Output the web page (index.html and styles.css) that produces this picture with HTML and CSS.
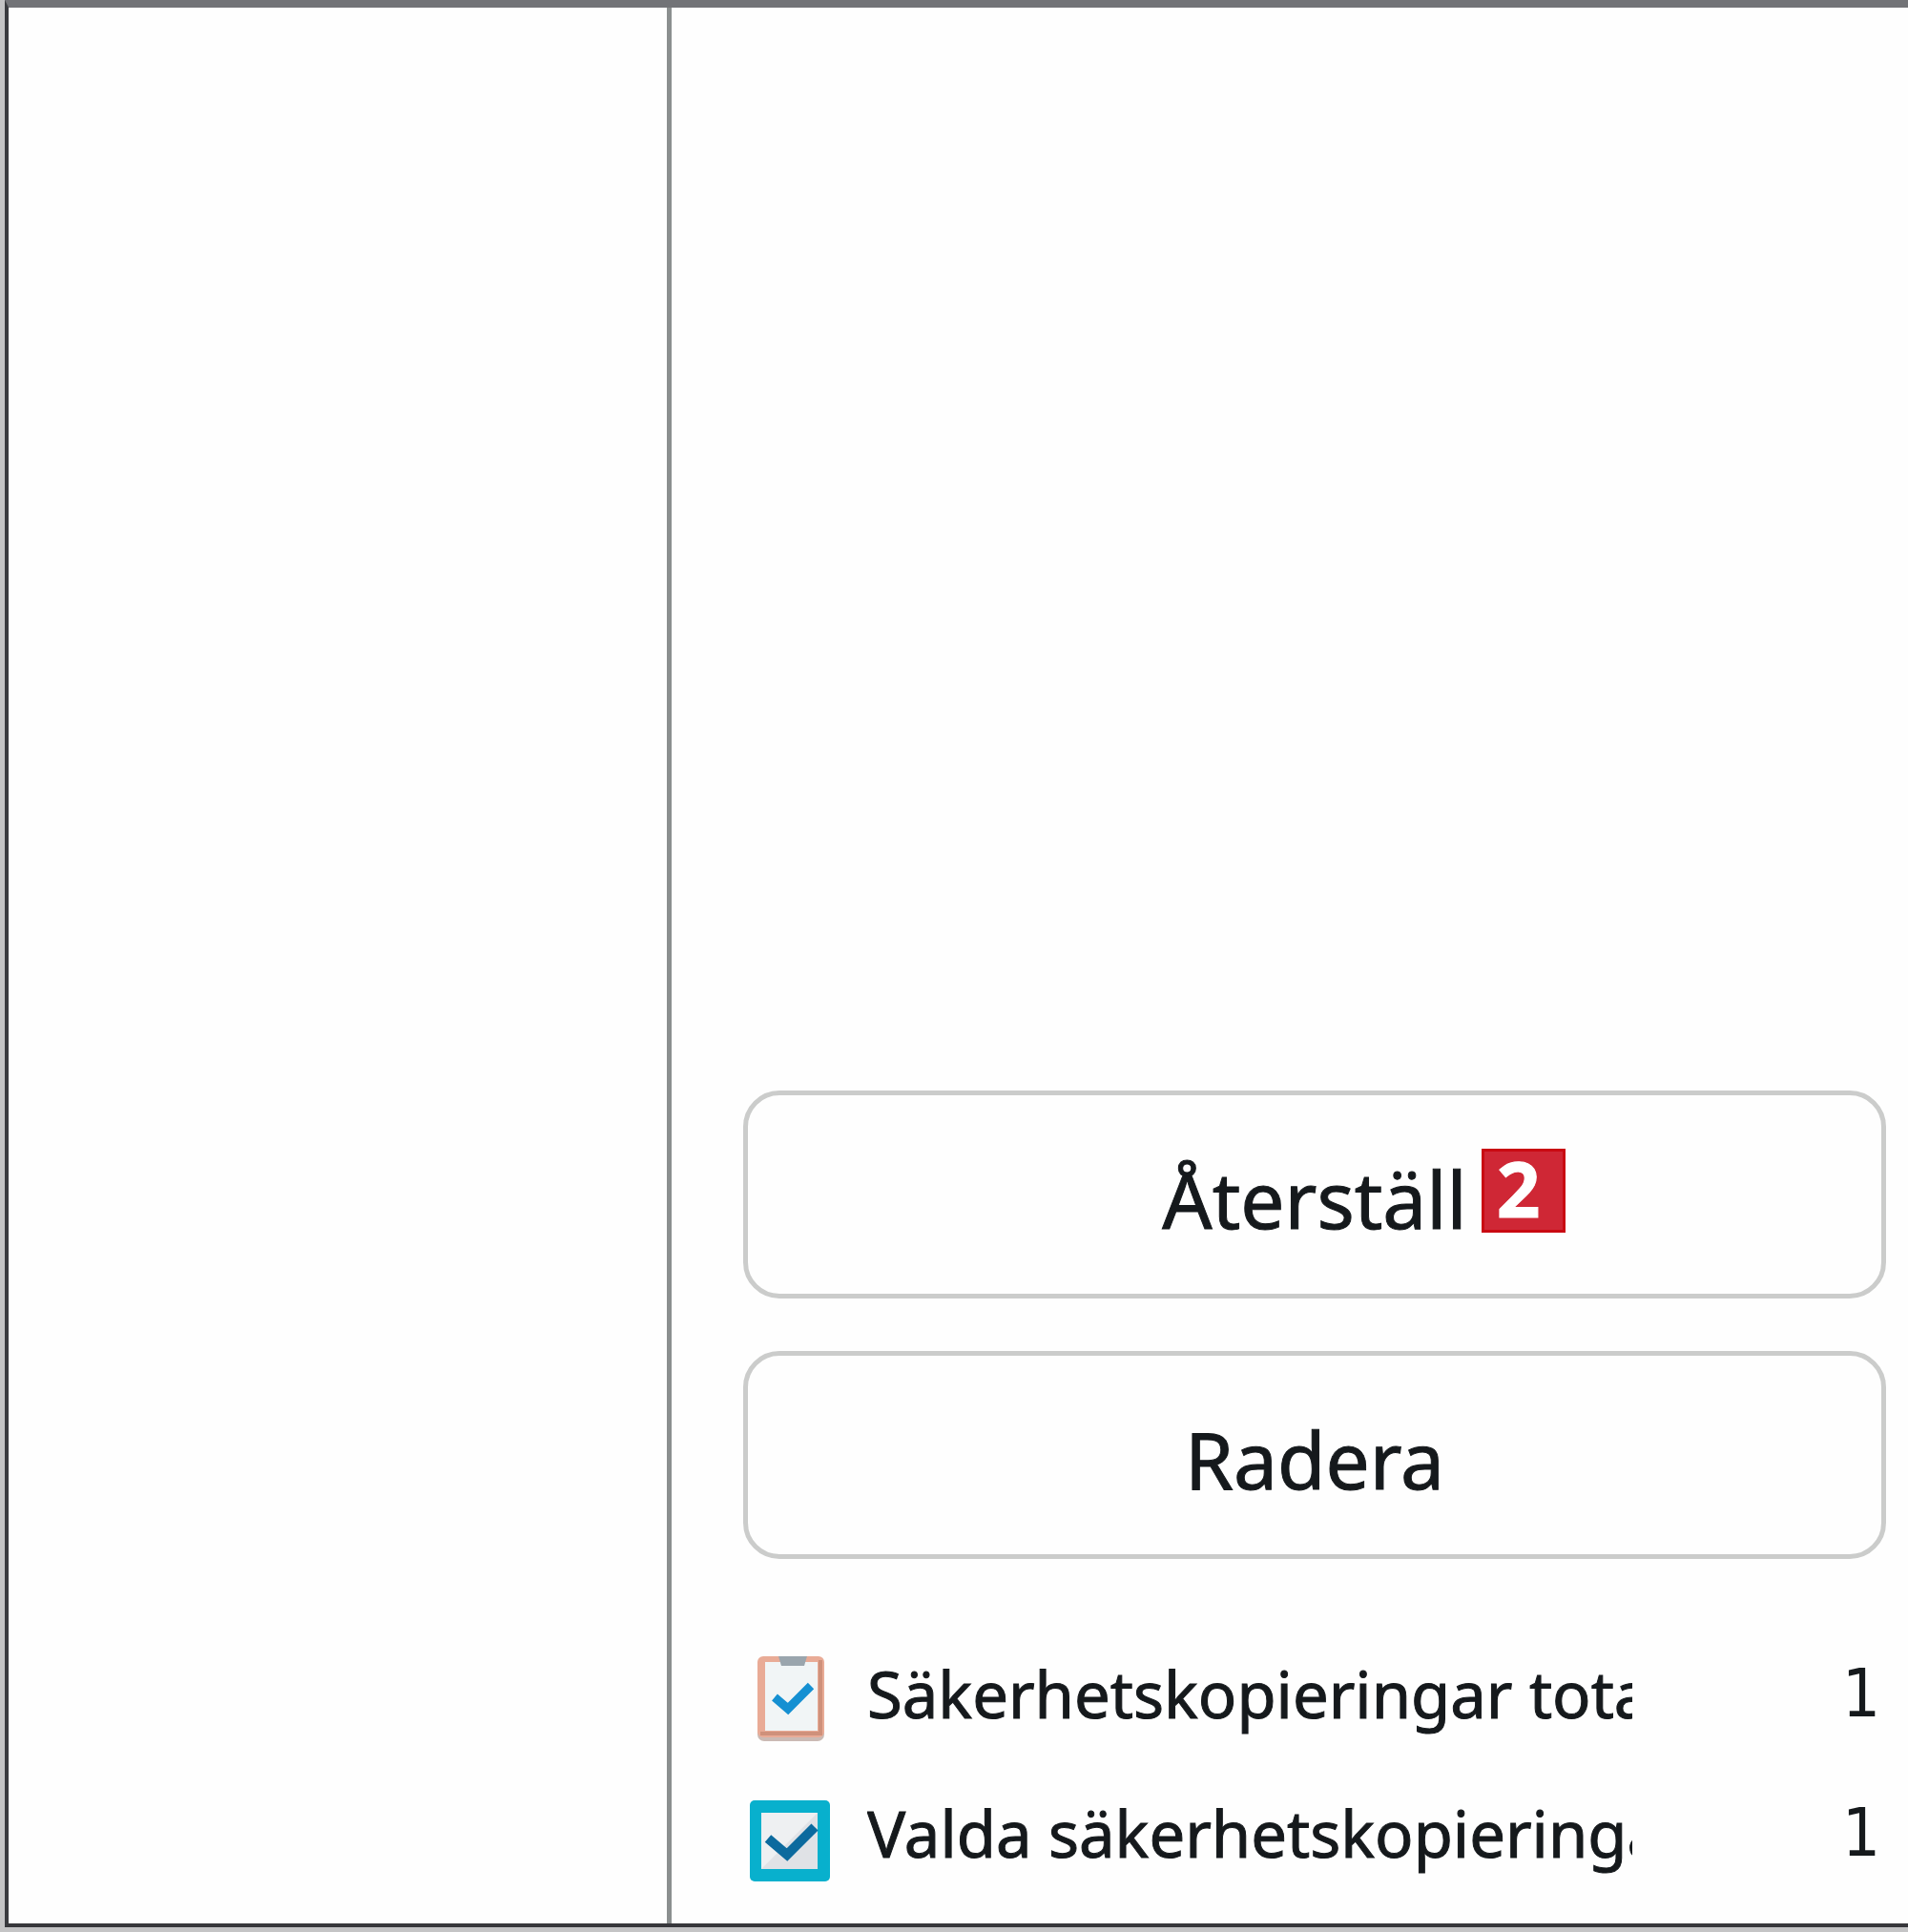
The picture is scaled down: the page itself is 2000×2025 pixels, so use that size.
FILE: index.html
```
<!DOCTYPE html>
<html lang="sv">

<head>
    <meta charset="UTF-8">
    <meta name="viewport" content="width=device-width, initial-scale=1.0">
    <title>Säkerhetskopieringar</title>
    <link rel="stylesheet" href="styles.css">
</head>

<body>
    <div class="window">
        <!-- left column -->
        <aside class="sidebar"></aside>

        <!-- backup panel -->
        <main class="panel">
            <div class="actions">
                <button type="button" class="action_btn">
                    <span class="action_label">Återställ<span class="badge">2</span></span>
                </button>
                <button type="button" class="action_btn">
                    <span class="action_label">Radera</span>
                </button>
            </div>

            <ul class="stats">
                <li>
                    <svg class="icon" viewBox="0 0 86 92" aria-hidden="true">
                        <rect x="9" y="4" width="70" height="86" rx="7" fill="#cbbab4" />
                        <rect x="9" y="1" width="70" height="85" rx="6" fill="#e9ab96" />
                        <path d="M75 5v77H12" fill="none" stroke="#cf917b" stroke-width="4" />
                        <rect x="17" y="7" width="55" height="72" fill="#f1f5f6" />
                        <path d="M31 1h30l-3 10H34z" fill="#9aa5ad" />
                        <path d="M27 44l14 12 24-24" fill="none" stroke="#1590d2" stroke-width="9" />
                    </svg>
                    <span class="stat_name">Säkerhetskopieringar totalt</span>
                    <span class="stat_count">1</span>
                </li>
                <li>
                    <svg class="icon" viewBox="0 0 86 92" aria-hidden="true">
                        <rect x="1" y="6" width="84" height="85" rx="5" fill="#08b0cd" />
                        <rect x="13" y="19" width="59" height="59" fill="#e0e2e6" />
                        <path d="M13 78V19h59z" fill="#eef0f2" />
                        <path d="M20 46l20 17 29-29" fill="none" stroke="#0c6a9e" stroke-width="10" />
                    </svg>
                    <span class="stat_name">Valda säkerhetskopieringar</span>
                    <span class="stat_count">1</span>
                </li>
            </ul>
        </main>
    </div>
</body>

</html>
```
FILE: styles.css
```
* {
    box-sizing: border-box;
}

body {
    display: flex;
    min-height: 100vh;
    margin: 0;
    padding: 0 0 5px 5px;
    background: #c4c4c5;
    color: #15191c;
    font-family: "Noto Sans", "Open Sans", sans-serif;
}

.window {
    flex: 1;
    display: grid;
    grid-template-columns: 695px 1fr;
    border-top: 8px solid #727377;
    border-left: 4px solid #3a3b3f;
    border-bottom: 4px solid #37373b;
    background: #fefefe;
}

.sidebar {
    border-right: 5px solid #8b8f8f;
}

.panel {
    display: flex;
    flex-direction: column;
    justify-content: flex-end;
    gap: 68px;
    padding: 20px 23px 22px 75px;
}

.actions {
    display: grid;
    gap: 55px;
}

.action_btn {
    height: 218px;
    padding: 8px 0 0;
    border: 5px solid #cbcccb;
    border-radius: 38px;
    background: #fefefe;
    color: inherit;
    font-family: inherit;
    font-size: 82px;
    line-height: 112px;
    -webkit-text-stroke: 1px;
}

.action_label {
    position: relative;
}

/* step number beside the label */
.badge {
    position: absolute;
    left: 100%;
    top: 4px;
    width: 88px;
    height: 88px;
    margin-left: 15px;
    padding-right: 10px;
    border: 3px solid #c90a12;
    background: #cf2735;
    color: #fff;
    font-family: "Open Sans", sans-serif;
    font-size: 80px;
    font-weight: bold;
    line-height: 76px;
    text-align: center;
}

.stats {
    margin: 0;
    padding: 0 6px;
    list-style: none;
}

.stats li {
    display: grid;
    grid-template-columns: 86px minmax(0, 802px) 1fr;
    column-gap: 38px;
    align-items: center;
    height: 146px;
}

.icon {
    width: 86px;
    height: 92px;
    margin-top: 12px;
}

.stat_name {
    overflow: hidden;
    font-size: 67px;
    line-height: 100px;
    white-space: nowrap;
    -webkit-text-stroke: 1px;
}

.stat_count {
    font-family: "DejaVu Sans Condensed", "DejaVu Sans", sans-serif;
    font-size: 70px;
    line-height: 100px;
    text-align: right;
}
```
